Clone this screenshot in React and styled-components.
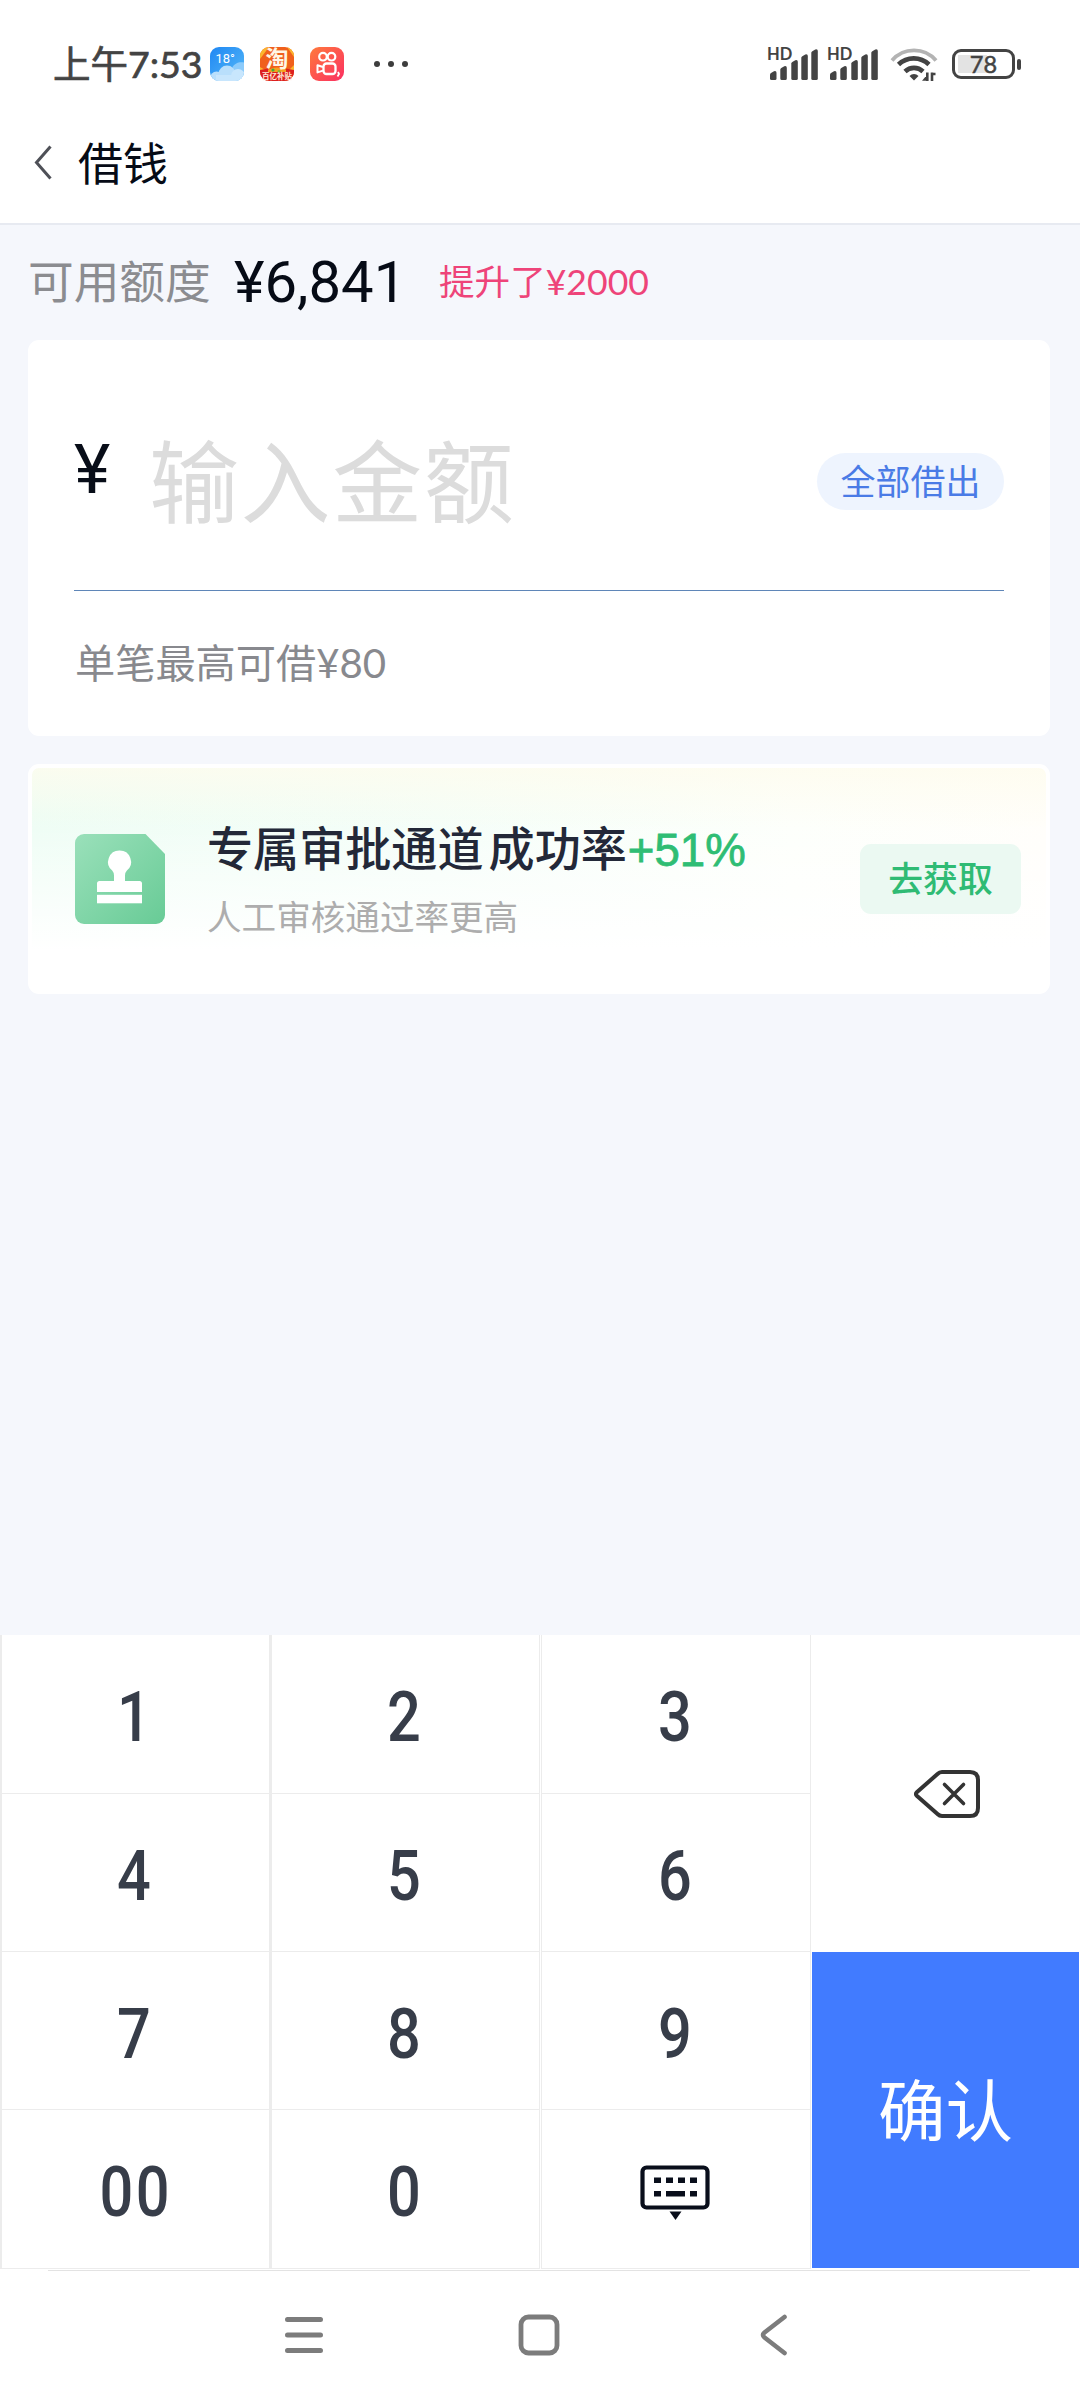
import React from "react";
import styled, { createGlobalStyle } from "styled-components";

const GlobalStyle = createGlobalStyle`
  * { box-sizing: border-box; }
  body {
    margin: 0;
    background: #f5f7fc;
    font-family: Lato, "Noto Sans CJK SC", sans-serif;
  }
  button { font-family: inherit; border: 0; padding: 0; background: none; }
  svg { display: block; flex: none; overflow: visible; }
`;

const Page = styled.main`
  width: 1080px;
  height: 2400px;
  display: flex;
  flex-direction: column;
  background: #f5f7fc;
  overflow: hidden;
  white-space: nowrap;
`;

/* ---------- status bar ---------- */
const StatusBar = styled.div`
  height: 128px;
  padding: 0 59px 0 53px;
  display: flex;
  align-items: center;
  background: #fff;
  color: #434343;
`;
const Clock = styled.span`
  width: 157px;
  font-size: 37.5px;
  line-height: 48px;
  -webkit-text-stroke: 0.7px #434343;
`;
const AppIcons = styled.div`
  display: flex;
  gap: 16px;
`;
const MoreDots = styled.div`
  display: flex;
  gap: 8px;
  margin-left: 30px;
  i { width: 6px; height: 6px; border-radius: 50%; background: #3d3d3d; }
`;
const StatusRight = styled.div`
  margin-left: auto;
  display: flex;
  align-items: center;
`;
const Battery = styled.div`
  width: 63px;
  height: 30px;
  margin-left: 15px;
  border: 3px solid #434343;
  border-radius: 9px;
  display: flex;
  align-items: center;
  justify-content: center;
  font-size: 23.5px;
  line-height: 24px;
  -webkit-text-stroke: 0.5px #434343;
  background: linear-gradient(#e3e3e3, #e3e3e3) 3px 3px / 29px 18px no-repeat;
`;
const BatteryTip = styled.i`
  width: 4px;
  height: 11px;
  margin-left: 2px;
  border-radius: 2px;
  background: #434343;
`;

/* ---------- header ---------- */
const Header = styled.header`
  height: 97px;
  padding: 0 0 23px 34px;
  display: flex;
  align-items: center;
  background: #fff;
  border-bottom: 2px solid #e7eaf1;
  svg { margin-top: -3px; }
`;
const Title = styled.h1`
  margin: 0 0 0 25px;
  font-size: 45px;
  line-height: 60px;
  font-weight: 400;
  color: #060b16;
`;

/* ---------- quota line ---------- */
const Quota = styled.section`
  height: 115px;
  padding: 0 0 1px 28px;
  display: flex;
  align-items: center;
`;
const QuotaLabel = styled.span`
  width: 206px;
  font-size: 45.7px;
  line-height: 60px;
  color: #8b8c90;
`;
const QuotaValue = styled.strong`
  width: 205px;
  font: 400 58px/66px Roboto, sans-serif;
  color: #060b16;
`;
const QuotaRaise = styled.span`
  font-size: 35.6px;
  line-height: 44px;
  color: #ee4479;
`;

/* ---------- cards ---------- */
const Card = styled.section`
  margin: 0 30px 0 28px;
  border-radius: 11px;
  background: #fff;
`;
const AmountCard = styled(Card)`
  height: 396px;
  padding: 0 46px;
`;
const AmountRow = styled.div`
  height: 251px;
  padding-top: 32px;
  display: flex;
  align-items: center;
  border-bottom: 1px solid #5f86b8;
`;
const Yen = styled.span`
  width: 75px;
  margin-top: -22px;
  font: 400 69px/80px Roboto, sans-serif;
  color: #080d18;
`;
const Placeholder = styled.span`
  font-size: 90px;
  letter-spacing: 1.6px;
  line-height: 110px;
  color: #dcdcdc;
`;
const AllButton = styled.button`
  width: 187px;
  height: 57px;
  margin-left: auto;
  border-radius: 29px;
  background: #eef4fe;
  color: #4a7be6;
  font-size: 35px;
  line-height: 56px;
`;
const Hint = styled.p`
  margin: 47px 0 0 1px;
  font-size: 40.2px;
  line-height: 50px;
  color: #88898e;
`;
const PromoCard = styled(Card)`
  height: 230px;
  margin-top: 28px;
  padding: 4px 25px 4px 43px;
  display: flex;
  align-items: center;
  border: 4px solid #fff;
  background:
    linear-gradient(180deg, rgba(254, 252, 238, 0.8) 0, rgba(255, 255, 255, 0) 60px),
    linear-gradient(180deg, rgba(255, 255, 255, 0) 20%, #fff 82%),
    linear-gradient(90deg, #edfdf4 0%, #f4fef8 40%, #fdfffb 75%, #fffefa 100%);
`;
const PromoText = styled.div`
  margin: -1px auto 0 42px;
`;
const PromoTitle = styled.h2`
  margin: 0;
  font-size: 46.1px;
  line-height: 60px;
  font-weight: 500;
  color: #232838;
  b { margin-left: 5px; font-weight: 500; }
  em {
    margin-left: 1px;
    font: 500 45.6px/60px "Liberation Sans", sans-serif;
    color: #2fbd74;
    -webkit-text-stroke: 0.8px #2fbd74;
  }
`;
const PromoSub = styled.p`
  margin: 14px 0 0;
  font-size: 34.6px;
  line-height: 44px;
  color: #adadad;
`;
const PromoButton = styled.button`
  width: 161px;
  height: 70px;
  border-radius: 11px;
  background: #ebf9f2;
  color: #2fbb74;
  font-size: 34.8px;
  line-height: 68px;
  font-weight: 500;
`;

/* ---------- keypad ---------- */
const Keypad = styled.section`
  margin-top: auto;
  height: 634px;
  display: grid;
  grid-template-columns: 811px 269px;
  background: #fff;
`;
const Digits = styled.div`
  display: grid;
  grid-template-columns: 270px 271px 270px;
  grid-template-rows: 159px 158px 158px 159px;
`;
const Key = styled.button`
  display: flex;
  align-items: center;
  justify-content: center;
  padding: 6px 3px 0 0;
  border: 0 solid #ececec;
  border-width: 0 1px 1px 2px;
  color: #373d49;
  font: 500 70px/80px Roboto, sans-serif;
  &:nth-child(3n + 2) { margin-right: 1px; }
  &:nth-child(3n) { border-left-width: 1px; }
  span {
    transform: scaleX(0.85);
    letter-spacing: ${(p) => (p.$wide ? "3px" : 0)};
    margin-right: ${(p) => (p.$wide ? "-3px" : 0)};
  }
`;
const Actions = styled.div`
  display: flex;
  flex-direction: column;
  padding: 0 1px;
`;
const DeleteKey = styled.button`
  height: 317px;
  padding-left: 2px;
  display: flex;
  align-items: center;
  justify-content: center;
`;
const ConfirmKey = styled.button`
  height: 316px;
  background: #417bff;
  color: #fff;
  font-size: 67.5px;
  line-height: 316px;
`;

/* ---------- system navigation ---------- */
const NavBar = styled.nav`
  height: 129px;
  display: flex;
  justify-content: center;
  align-items: center;
  gap: 195px;
  padding: 0 7px 1px 0;
  background: #fff;
  svg:last-child { margin-left: 5px; }
`;
const NavLine = styled.div`
  height: 2px;
  background:
    linear-gradient(90deg, #fff 48px, #e3e3e3 48px, #e3e3e3 1030px, #fff 1030px) 0 1px / 100% 1px no-repeat,
    #fff;
`;

const WeatherIcon = () => (
  <svg width="34" height="34" viewBox="0 0 34 34">
    <defs>
      <linearGradient id="sky" x1="0" y1="0" x2="1" y2="1">
        <stop offset="0" stopColor="#1f87f3" />
        <stop offset="1" stopColor="#56baf8" />
      </linearGradient>
      <clipPath id="weatherClip"><rect width="34" height="34" rx="9" /></clipPath>
    </defs>
    <g clipPath="url(#weatherClip)">
      <rect width="34" height="34" fill="url(#sky)" />
      <path d="M34 15.500c-5-1-10 1-11.500 5l-2 13.500H34z" fill="#8ccbfb" />
      <circle cx="17" cy="27" r="8.500" fill="#b9dffc" />
      <circle cx="6.500" cy="31" r="6.500" fill="#b9dffc" />
      <circle cx="28" cy="29" r="7" fill="#c8e6fd" />
      <rect x="6" y="28" width="28" height="6" fill="#c8e6fd" />
    </g>
    <text x="5.500" y="15.500" fontFamily="Roboto, sans-serif" fontSize="13" fill="#fff">18°</text>
  </svg>
);

const TaobaoIcon = () => (
  <svg width="34" height="34" viewBox="0 0 34 34">
    <defs>
      <clipPath id="taoClip"><rect width="34" height="34" rx="9" /></clipPath>
    </defs>
    <g clipPath="url(#taoClip)">
      <rect width="34" height="34" fill="#f0601c" />
      <path d="M0 0h9L0 12zM34 0h-7l7 10zM0 20l7 4H0zM34 18l-6 6h6z" fill="#fbb52e" />
      <path d="M0 23q17-4 34 0v11H0z" fill="#dd2020" />
      <path d="M8 22.500q9-4 18 0v2.500H8z" fill="#f6a01f" />
      <circle cx="13" cy="23" r="1.600" fill="#49a63d" />
      <circle cx="19" cy="24.500" r="1.500" fill="#7fb52f" />
    </g>
    <text x="17" y="19.500" textAnchor="middle" fontFamily="'Noto Sans CJK SC', sans-serif" fontWeight="700" fontSize="23" fill="#fff6e6">淘</text>
    <text x="17" y="32" textAnchor="middle" fontFamily="'Noto Sans CJK SC', sans-serif" fontWeight="700" fontSize="7.500" fill="#ffe9d8">百亿补贴</text>
  </svg>
);

const KuaishouIcon = () => (
  <svg width="34" height="34" viewBox="0 0 34 34" fill="none" stroke="#fff">
    <defs>
      <linearGradient id="ks" x1="0" y1="0" x2="1" y2="1">
        <stop offset="0" stopColor="#ff7a3c" />
        <stop offset="1" stopColor="#fb2f62" />
      </linearGradient>
    </defs>
    <rect width="34" height="34" rx="9" fill="url(#ks)" stroke="none" />
    <circle cx="13" cy="9.700" r="3.800" strokeWidth="2.200" />
    <circle cx="21.500" cy="9.700" r="3.800" strokeWidth="2.200" />
    <rect x="13.500" y="16.500" width="12" height="10.500" rx="3" strokeWidth="2.300" />
    <path d="M13 20l-5.500-1.800v7.200L13 23.600" strokeWidth="2" strokeLinejoin="round" />
    <path d="M28 25l1 2-1.500 2.500" strokeWidth="1.800" />
  </svg>
);

const bars = [
  [2, 24],
  [12.3, 19],
  [23.3, 13],
  [33.3, 7.3],
  [43.3, 2.3],
];
const SignalIcon = () => (
  <svg width="60" height="34" viewBox="0 0 60 34" fill="#434343">
    <text x="-1" y="13" fontFamily="Lato, sans-serif" fontWeight="700" fontSize="16.500">HD</text>
    {bars.map(([x, y]) => (
      <path key={x} d={`M${x} ${y + 3.5}q0-1 1-1.600l3-1.700q2.500-.6 2.500 1.500V31.500q0 1.500-1.500 1.500h-3.500q-1.500 0-1.500-1.500z`} />
    ))}
  </svg>
);

const WifiIcon = () => (
  <svg width="49" height="34" viewBox="-3 0 49 34" fill="none" stroke="#434343" strokeWidth="4.600">
    <path d="M1 13.500A29 29 0 0 1 45 13.500" stroke="#b3b3b3" strokeWidth="3.800" />
    <path d="M7.500 17.500A22 22 0 0 1 38 17.500" />
    <path d="M14 24.500A13 13 0 0 1 32 24.500" />
    <path d="M18.500 29a6.300 6.300 0 0 1 9 0L23 33.500z" fill="#434343" stroke="none" />
    <path d="M36.300 25.500v8.500M36.800 32.500h-3l2.500-3M41 34v-8.500M41 27h3.500" strokeWidth="2.600" />
  </svg>
);

const BackChevron = () => (
  <svg width="19" height="36" viewBox="0 0 19 36" fill="none" stroke="#4e5057" strokeWidth="3">
    <path d="M16.500 1.500L2.500 17.500L16.500 33.500" />
  </svg>
);

const StampIcon = () => (
  <svg width="90" height="90" viewBox="0 0 90 90">
    <defs>
      <linearGradient id="stamp" x1="0" y1="0" x2="1" y2="1">
        <stop offset="0" stopColor="#9ae0ba" />
        <stop offset="1" stopColor="#68cb96" />
      </linearGradient>
    </defs>
    <path d="M9 0H70.500L90 20V81a9 9 0 0 1-9 9H9a9 9 0 0 1-9-9V9a9 9 0 0 1 9-9z" fill="url(#stamp)" />
    <path
      d="M44.600 16.500a11.300 11.300 0 0 1 7.300 20q-1.900 2-1.900 5V47h14.500q2.500 0 2.500 2.500V58H22v-8.500q0-2.500 2.500-2.500H39v-5.500q0-3-1.800-5a11.300 11.300 0 0 1 7.400-20z"
      fill="#fff"
    />
    <rect x="22" y="60.800" width="45" height="8.500" fill="#fff" />
  </svg>
);

const DeleteIcon = () => (
  <svg width="68" height="50" viewBox="0 0 68 50" fill="none" stroke="#333" strokeWidth="4">
    <path d="M29 3H57Q65 3 65 11V39Q65 47 57 47H29Q26.500 47 24.500 45L3.800 26.700Q2 25 3.800 23.300L24.500 5Q26.500 3 29 3Z" />
    <path d="M31.500 15.500L50.500 34.500M50.500 15.500L31.500 34.500" strokeWidth="3.600" strokeLinecap="round" />
  </svg>
);

const KeyboardIcon = () => (
  <svg width="70" height="55" viewBox="0 0 70 55" fill="#090e1b">
    <rect x="2.500" y="2.500" width="65" height="40" rx="4" fill="none" stroke="#090e1b" strokeWidth="4.200" />
    <path d="M14 12.500h7v5.500h-7zM26 12.500h7v5.500h-7zM38 12.500h7v5.500h-7zM50 12.500h7v5.500h-7zM14 26h7v5.500h-7zM26 26h19v5.500H26zM50 26h7v5.500h-7z" />
    <path d="M29.500 46.500h12l-6 8.500z" />
  </svg>
);

const MenuIcon = () => (
  <svg width="38" height="42" viewBox="0 0 38 42" stroke="#7c7c7c" strokeWidth="5" strokeLinecap="round">
    <path d="M2.500 5.500h33M2.500 21h33M2.500 36.500h33" />
  </svg>
);
const HomeIcon = () => (
  <svg width="42" height="42" viewBox="0 0 42 42" fill="none" stroke="#7c7c7c" strokeWidth="4.800">
    <rect x="3" y="3" width="36" height="36" rx="7.500" />
  </svg>
);
const NavBackIcon = () => (
  <svg width="28" height="42" viewBox="0 0 28 42" fill="none" stroke="#7c7c7c" strokeWidth="4.600" strokeLinecap="round">
    <path d="M24.500 3L4.500 18.500Q1.500 21 4.500 23.500L24.500 39" strokeLinejoin="round" />
  </svg>
);

const keys = ["1", "2", "3", "4", "5", "6", "7", "8", "9", "00", "0"];

export default function App() {
  return (
    <Page>
      <GlobalStyle />
      <StatusBar>
        <Clock>上午7:53</Clock>
        <AppIcons>
          <WeatherIcon />
          <TaobaoIcon />
          <KuaishouIcon />
        </AppIcons>
        <MoreDots><i /><i /><i /></MoreDots>
        <StatusRight>
          <SignalIcon />
          <SignalIcon />
          <WifiIcon />
          <Battery>78</Battery>
          <BatteryTip />
        </StatusRight>
      </StatusBar>

      <Header>
        <BackChevron />
        <Title>借钱</Title>
      </Header>

      <Quota>
        <QuotaLabel>可用额度</QuotaLabel>
        <QuotaValue>¥6,841</QuotaValue>
        <QuotaRaise>提升了¥2000</QuotaRaise>
      </Quota>

      <AmountCard>
        <AmountRow>
          <Yen>¥</Yen>
          <Placeholder>输入金额</Placeholder>
          <AllButton>全部借出</AllButton>
        </AmountRow>
        <Hint>单笔最高可借¥80</Hint>
      </AmountCard>

      <PromoCard>
        <StampIcon />
        <PromoText>
          <PromoTitle>
            专属审批通道<b>成功率</b><em>+51%</em>
          </PromoTitle>
          <PromoSub>人工审核通过率更高</PromoSub>
        </PromoText>
        <PromoButton>去获取</PromoButton>
      </PromoCard>

      <Keypad>
        <Digits>
          {keys.map((k) => (
            <Key key={k} $wide={k.length > 1}><span>{k}</span></Key>
          ))}
          <Key><KeyboardIcon /></Key>
        </Digits>
        <Actions>
          <DeleteKey><DeleteIcon /></DeleteKey>
          <ConfirmKey>确认</ConfirmKey>
        </Actions>
      </Keypad>
      <NavLine />
      <NavBar>
        <MenuIcon />
        <HomeIcon />
        <NavBackIcon />
      </NavBar>
    </Page>
  );
}
